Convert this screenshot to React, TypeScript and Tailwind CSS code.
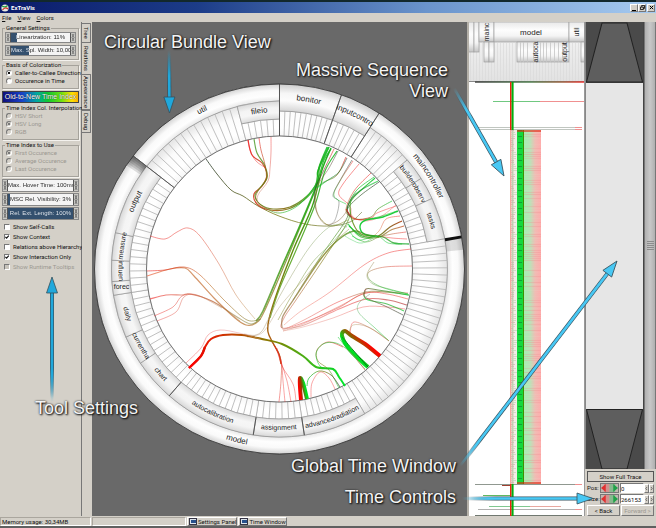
import { useState, type ReactNode } from "react";

type Pt = [number, number];

const CX = 279.5;
const CY = 269;

function polar(r: number, deg: number): Pt {
  const a = (deg * Math.PI) / 180;
  return [CX + r * Math.sin(a), CY - r * Math.cos(a)];
}

function sector(r0: number, r1: number, a0: number, a1: number) {
  const large = a1 - a0 > 180 ? 1 : 0;
  const p = [polar(r1, a0), polar(r1, a1), polar(r0, a1), polar(r0, a0)];
  return `M${p[0]} A${r1} ${r1} 0 ${large} 1 ${p[1]} L${p[2]} A${r0} ${r0} 0 ${large} 0 ${p[3]} Z`;
}

function smooth(pts: Pt[]) {
  let d = `M${pts[0]}`;
  for (let i = 0; i < pts.length - 1; i++) {
    const a = pts[i - 1] ?? pts[i];
    const b = pts[i];
    const c = pts[i + 1];
    const e = pts[i + 2] ?? c;
    d += ` C${b[0] + (c[0] - a[0]) / 6} ${b[1] + (c[1] - a[1]) / 6} ${c[0] - (e[0] - b[0]) / 6} ${c[1] - (e[1] - b[1]) / 6} ${c}`;
  }
  return d;
}

/* ---------- circular bundle view ---------- */

type Segment = { name: string; label?: string; from: number; to: number; r0: number; r1: number; at?: number; flat?: boolean };

const segments: Segment[] = [
  { name: "util", from: 307.7, to: 360, r0: 168, r1: 185, at: 334 },
  { name: "bonitor", from: 0, to: 19.6, r0: 158, r1: 185 },
  { name: "inputcontro", from: 19.6, to: 32.6, r0: 158, r1: 185 },
  { name: "maincontroller", from: 32.6, to: 80, r0: 168, r1: 185, at: 58 },
  { name: "model", from: 80, to: 307.7, r0: 168, r1: 185, at: 194 },
  { name: "fileio", from: 345.4, to: 360, r0: 150, r1: 168 },
  { name: "builder", label: "builderobserv", from: 49.5, to: 57.4, r0: 150, r1: 168, at: 57.4 },
  { name: "observ", label: "", from: 57.4, to: 65.2, r0: 150, r1: 168 },
  { name: "tasks", from: 65.2, to: 79.6, r0: 150, r1: 168 },
  { name: "advancedradiation", from: 149.5, to: 171.5, r0: 150, r1: 168 },
  { name: "assignment", from: 171.5, to: 189, r0: 150, r1: 168 },
  { name: "autocalibration", from: 189, to: 221, r0: 150, r1: 168 },
  { name: "chart", from: 221, to: 235.9, r0: 150, r1: 168 },
  { name: "currentha", from: 235.9, to: 246.1, r0: 150, r1: 168 },
  { name: "daily", from: 246.1, to: 261, r0: 150, r1: 168 },
  { name: "forec", from: 261, to: 265.7, r0: 150, r1: 168, flat: true },
  { name: "influen", from: 265.7, to: 273, r0: 150, r1: 168 },
  { name: "measure", from: 273, to: 282.5, r0: 150, r1: 168, at: 278.4 },
  { name: "output", from: 282.5, to: 307.7, r0: 150, r1: 168 },
];

const leafRuns = [
  { from: 0, to: 19.6, n: 10, r1: 158 },
  { from: 19.6, to: 32.6, n: 6, r1: 158 },
  { from: 32.6, to: 49.5, n: 7, r1: 168 },
  { from: 49.5, to: 79.6, n: 12, r1: 150 },
  { from: 79.6, to: 149.5, n: 28, r1: 168 },
  { from: 149.5, to: 171.5, n: 9, r1: 150 },
  { from: 171.5, to: 189, n: 7, r1: 150 },
  { from: 189, to: 221, n: 13, r1: 150 },
  { from: 221, to: 261, n: 15, r1: 150 },
  { from: 261, to: 307.7, n: 17, r1: 150 },
  { from: 307.7, to: 345.4, n: 14, r1: 168 },
  { from: 345.4, to: 360, n: 6, r1: 150 },
];

const RED = "#f02020";
const GREEN = "#08c828";
const OLIVE = "#7a7a10";
const DARK = "#283828";

type Edge = { p: Pt[]; a: string; m?: string; b: string; w?: number; o?: number };

const edges: Edge[] = [
  // util to main controller
  { p: [[206, 159], [217, 174], [231, 190], [243, 196], [258, 206], [279, 216], [305, 224], [330, 226], [350, 222], [362, 212]], a: DARK, m: OLIVE, b: "#889060", w: 1, o: 0.8 },
  // fileio to bonitor
  { p: [[248, 140], [252, 155], [262, 163], [267, 175], [262, 186], [254, 194], [257, 204], [270, 210], [288, 209], [304, 200], [315, 187], [319, 167], [327, 147]], a: RED, m: "#8a5a00", b: GREEN, w: 1.2, o: 0.85 },
  { p: [[254, 139], [257, 153], [265, 166], [267, 178], [259, 189], [255, 196], [261, 205], [273, 209], [290, 207], [307, 196], [317, 182], [324, 160], [331, 149]], a: "#50a030", m: "#806000", b: GREEN, w: 1.2, o: 0.85 },
  { p: [[259, 138], [261, 150], [265, 165], [266, 180], [258, 191], [256, 199], [264, 207], [280, 213], [300, 204], [318, 182]], a: RED, m: "#7a6a00", b: GREEN, w: 1, o: 0.6 },
  { p: [[271, 137], [271, 152], [270, 168], [268, 181], [258, 195], [259, 204], [270, 210]], a: RED, b: "#c09070", w: 1, o: 0.45 },
  { p: [[248, 140], [250, 150], [256, 161], [266, 168]], a: RED, b: RED, w: 1, o: 0.45 },
  // fan below bonitor
  { p: [[328, 147], [320, 165], [317, 185], [301, 225], [284, 266], [264, 312], [256, 323], [246, 325], [235, 318], [214, 298], [194, 276], [185, 268], [170, 269], [147, 276]], a: "#18b020", m: OLIVE, b: "#f07050", w: 1.2, o: 0.75 },
  { p: [[331, 148], [322, 170], [312, 207], [294, 248], [278, 290], [269, 319], [268, 332], [273, 343], [279, 354], [281, 364]], a: "#18b020", m: "#609010", b: "#c05010", w: 1.4 },
  { p: [[329, 147], [318, 171], [317, 184], [298, 230], [280, 271], [263, 311], [256, 321]], a: "#10b820", m: "#30a010", b: "#70a040", w: 1.7, o: 0.9 },
  { p: [[337, 151], [325, 171], [315, 205], [297, 248], [279, 290], [270, 318]], a: "#10b820", m: "#40a010", b: "#70a020", w: 1.2, o: 0.85 },
  { p: [[334, 149], [323, 172], [315, 190], [316, 210], [325, 224], [338, 221], [347, 211]], a: RED, m: DARK, b: "#988060", w: 1, o: 0.6 },
  { p: [[338, 151], [329, 168], [317, 188], [317, 212], [330, 226], [348, 220]], a: DARK, m: "#c06040", b: OLIVE, w: 1, o: 0.5 },
  { p: [[346, 157], [337, 175], [324, 182], [316, 188]], a: RED, b: GREEN, w: 1, o: 0.7 },
  { p: [[347, 158], [339, 172], [328, 180], [317, 188]], a: DARK, b: GREEN, w: 1, o: 0.6 },
  { p: [[352, 160], [342, 177], [333, 195], [339, 202], [335, 220], [328, 226]], a: DARK, b: "#808080", w: 1, o: 0.5 },
  { p: [[353, 161], [340, 181], [334, 196], [346, 204]], a: RED, b: GREEN, w: 1, o: 0.5 },
  { p: [[359, 164], [343, 184], [339, 195], [350, 206], [352, 216], [364, 221], [380, 217], [396, 205]], a: RED, b: "#f07070", w: 1, o: 0.5 },
  { p: [[371, 173], [354, 191], [346, 211], [356, 219], [374, 218], [397, 211]], a: RED, m: OLIVE, b: GREEN, w: 1, o: 0.55 },
  { p: [[374, 177], [356, 191], [347, 209], [348, 221], [323, 260], [296, 300], [284, 318], [282, 328], [300, 324], [338, 308], [366, 293], [408, 293]], a: GREEN, m: OLIVE, b: "#f07070", w: 1, o: 0.65 },
  { p: [[379, 182], [361, 195], [348, 208], [346, 220], [319, 259], [293, 300]], a: DARK, m: "#58a030", b: "#909050", w: 1, o: 0.65 },
  { p: [[375, 178], [354, 197], [350, 207], [353, 223], [361, 234], [377, 236]], a: GREEN, b: OLIVE, w: 1.1, o: 0.85 },
  { p: [[378, 181], [361, 190], [352, 198], [347, 210], [351, 217]], a: GREEN, b: DARK, w: 1.3, o: 0.65 },
  { p: [[392, 201], [378, 209], [371, 217], [354, 219], [346, 209]], a: GREEN, b: RED, w: 1, o: 0.65 },
  { p: [[396, 206], [377, 213], [371, 218], [355, 219], [346, 209]], a: RED, b: RED, w: 1, o: 0.45 },
  { p: [[398, 211], [383, 217], [366, 220], [360, 226], [364, 234], [379, 237]], a: GREEN, b: GREEN, w: 1.4, o: 0.9 },
  { p: [[400, 216], [386, 219], [379, 231], [369, 237], [352, 230]], a: RED, m: "#e08050", b: GREEN, w: 1, o: 0.5 },
  { p: [[402, 221], [390, 227], [378, 236], [362, 236], [349, 226]], a: "#a83000", b: GREEN, w: 1.2, o: 0.85 },
  { p: [[404, 226], [391, 230], [379, 237], [361, 237], [348, 224]], a: "#c04010", b: GREEN, w: 1.1, o: 0.7 },
  { p: [[406, 232], [392, 234], [379, 237], [366, 242], [352, 236]], a: RED, b: GREEN, w: 1, o: 0.5 },
  { p: [[407, 239], [392, 238], [378, 236]], a: RED, b: RED, w: 1, o: 0.45 },
  { p: [[409, 244], [394, 243], [383, 237], [368, 235], [354, 231], [338, 240], [320, 260], [298, 293], [283, 316], [282, 328]], a: "#10a828", m: OLIVE, b: "#a07850", w: 1.3, o: 0.75 },
  { p: [[402, 244], [388, 243], [377, 236], [359, 240], [349, 231]], a: GREEN, b: GREEN, w: 1, o: 0.5 },
  { p: [[377, 236], [362, 243], [352, 240], [345, 236]], a: "#60d070", b: "#80e090", w: 1, o: 0.6 },
  { p: [[347, 227], [331, 226], [309, 248], [282, 292], [268, 320], [260, 333], [247, 337]], a: "#88b070", b: "#b09878", w: 1, o: 0.5 },
  { p: [[349, 229], [330, 247], [303, 280], [281, 305], [262, 333], [244, 334]], a: OLIVE, b: "#c0a090", w: 1, o: 0.4 },
  { p: [[348, 224], [332, 243], [312, 263], [292, 295], [278, 320]], a: "#60a850", b: OLIVE, w: 1, o: 0.45 },
  // model bundle on the right
  { p: [[411, 249], [388, 253], [364, 265], [330, 292], [301, 311], [284, 325]], a: RED, b: "#f09080", w: 1, o: 0.5 },
  { p: [[412, 266], [385, 267], [369, 272], [370, 280], [384, 288], [408, 294]], a: RED, b: GREEN, w: 1, o: 0.45 },
  { p: [[374, 262], [367, 275], [373, 284], [389, 289], [408, 294]], a: "#a09060", b: GREEN, w: 1, o: 0.5 },
  { p: [[409, 295], [385, 292], [366, 292], [338, 302], [304, 320], [283, 330]], a: GREEN, m: "#f04040", b: "#e09080", w: 1, o: 0.55 },
  { p: [[408, 299], [387, 294], [366, 293], [340, 306], [303, 324], [283, 331]], a: RED, b: "#e09080", w: 1, o: 0.5 },
  { p: [[407, 305], [388, 300], [366, 299], [339, 309], [304, 325], [282, 329]], a: "#a81818", m: "#f05050", b: "#d0a090", w: 1.1, o: 0.6 },
  { p: [[405, 309], [387, 307], [363, 307], [333, 318], [303, 327], [283, 331]], a: RED, b: "#e0a090", w: 1, o: 0.4 },
  { p: [[404, 311], [387, 304], [366, 299], [366, 289], [378, 290], [409, 295]], a: GREEN, m: "#803020", b: GREEN, w: 1.1, o: 0.7 },
  { p: [[403, 315], [385, 306], [365, 297], [366, 291]], a: DARK, b: "#905030", w: 1, o: 0.6 },
  { p: [[389, 341], [375, 328], [359, 313], [359, 303], [370, 294]], a: GREEN, b: "#80b080", w: 1, o: 0.5 },
  { p: [[388, 340], [372, 329], [354, 322], [350, 333]], a: GREEN, b: RED, w: 1, o: 0.4 },
  { p: [[389, 341], [368, 327], [353, 325], [349, 333]], a: RED, b: "#a0a060", w: 1, o: 0.4 },
  // heavy bundles at the bottom
  { p: [[380, 356], [365, 344], [352, 336], [345, 331], [342, 336], [350, 350], [368, 367]], a: "#ff0000", m: "#8a6200", b: "#00e020", w: 4 },
  { p: [[368, 367], [353, 350], [342, 337]], a: "#046010", b: "#04a020", w: 1 },
  { p: [[365, 369], [349, 351], [338, 337]], a: GREEN, b: GREEN, w: 1, o: 0.5 },
  { p: [[301, 400], [300, 387], [300, 378], [303, 383], [307, 399]], a: "#ff0000", m: "#8a4200", b: "#00e020", w: 4 },
  { p: [[189, 368], [201, 356], [205, 347], [211, 339], [223, 335], [242, 335], [262, 339], [282, 344], [303, 356], [316, 367], [333, 369], [339, 377], [345, 386]], a: "#ff0000", m: "#848000", b: "#00e82c", w: 2 },
  { p: [[189, 368], [201, 356], [205, 347]], a: "#ff0000", b: "#e01000", w: 2.4 },
  { p: [[186, 363], [201, 348], [208, 335], [220, 330], [239, 333], [260, 339]], a: RED, b: "#e0a0a0", w: 1, o: 0.4 },
  { p: [[339, 388], [329, 370], [318, 361], [317, 350], [328, 342], [343, 347]], a: GREEN, m: OLIVE, b: RED, w: 1, o: 0.55 },
  { p: [[340, 387], [331, 375], [319, 371], [309, 378], [307, 386]], a: DARK, m: OLIVE, b: GREEN, w: 1, o: 0.7 },
  { p: [[335, 389], [329, 378], [320, 372], [312, 383], [311, 397]], a: RED, b: RED, w: 1, o: 0.4 },
  { p: [[365, 370], [350, 352], [336, 343], [323, 344], [316, 354], [321, 367], [334, 369]], a: RED, m: "#b08060", b: GREEN, w: 1, o: 0.55 },
  { p: [[279, 402], [281, 381], [281, 360], [274, 345], [269, 340]], a: RED, b: "#a05010", w: 1, o: 0.45 },
  { p: [[285, 402], [283, 381], [281, 360], [274, 345]], a: RED, b: RED, w: 1, o: 0.4 },
  { p: [[291, 402], [287, 381], [281, 362], [275, 346]], a: RED, b: RED, w: 1, o: 0.4 },
  { p: [[296, 401], [293, 384], [282, 366], [277, 348]], a: RED, b: RED, w: 1, o: 0.4 },
  // left side bundles
  { p: [[150, 236], [165, 239], [177, 232], [188, 228], [200, 236], [219, 264], [236, 295], [255, 319]], a: RED, b: "#c0a060", w: 1, o: 0.5 },
  { p: [[147, 271], [165, 270], [184, 267], [200, 275], [226, 302], [247, 320], [261, 319]], a: RED, m: "#c06a20", b: "#808030", w: 1, o: 0.6 },
  { p: [[150, 299], [166, 295], [182, 295], [190, 294], [212, 301], [237, 317], [251, 324], [260, 319]], a: RED, m: "#c07040", b: "#788838", w: 1.1, o: 0.6 },
  { p: [[154, 316], [173, 307], [182, 296], [196, 295], [219, 305], [240, 321]], a: RED, b: "#b08050", w: 1, o: 0.45 },
  { p: [[157, 321], [176, 312], [184, 297], [197, 295], [222, 308]], a: RED, b: "#b08050", w: 1, o: 0.4 },
];

function ArcLabel({ seg, index }: { seg: Segment; index: number }) {
  const mid = seg.at ?? (seg.from + seg.to) / 2;
  const rc = (seg.r0 + seg.r1) / 2;
  const size = seg.r1 > 170 || seg.name === "fileio" || seg.name === "output" ? 8 : 7;
  const text = seg.label ?? seg.name;
  if (!text) return null;
  if (seg.flat) {
    const [x, y] = polar(rc, mid);
    return <text x={x} y={y + 2} fontSize={size} textAnchor="middle">{text}</text>;
  }
  const inward = mid > 90 && mid < 270;
  const r = inward ? rc + 2 : rc - 2;
  const start = polar(r, inward ? mid + 30 : mid - 30);
  const end = polar(r, inward ? mid - 30 : mid + 30);
  return (
    <>
      <path id={`arc-${index}`} d={`M${start} A${r} ${r} 0 0 ${inward ? 0 : 1} ${end}`} fill="none" />
      <text fontSize={size} textAnchor="middle">
        <textPath href={`#arc-${index}`} startOffset="50%">{text}</textPath>
      </text>
    </>
  );
}

function BundleView() {
  return (
    <svg viewBox="92 22 375 494" className="block h-full w-full" role="img" aria-label="Circular bundle view">
      <defs>
        <radialGradient id="ring" gradientUnits="userSpaceOnUse" cx={CX} cy={CY} r="185">
          <stop offset="0.905" stopColor="#e6e6e6" />
          <stop offset="0.935" stopColor="#fefefe" />
          <stop offset="0.965" stopColor="#fafafa" />
          <stop offset="1" stopColor="#d2d2d2" />
        </radialGradient>
        <radialGradient id="tall" gradientUnits="userSpaceOnUse" cx={CX} cy={CY} r="185">
          <stop offset="0.855" stopColor="#d6d6d6" />
          <stop offset="0.91" stopColor="#fcfcfc" />
          <stop offset="0.95" stopColor="#f6f6f6" />
          <stop offset="1" stopColor="#cccccc" />
        </radialGradient>
        <radialGradient id="inner" gradientUnits="userSpaceOnUse" cx={CX} cy={CY} r="168">
          <stop offset="0.89" stopColor="#dadada" />
          <stop offset="0.93" stopColor="#f6f6f6" />
          <stop offset="0.96" stopColor="#f4f4f4" />
          <stop offset="1" stopColor="#d8d8d8" />
        </radialGradient>
        <radialGradient id="leaf" gradientUnits="userSpaceOnUse" cx={CX} cy={CY} r="168">
          <stop offset="0.79" stopColor="#f6f6f6" />
          <stop offset="0.84" stopColor="#ffffff" />
          <stop offset="0.93" stopColor="#fcfcfc" />
          <stop offset="1" stopColor="#e4e4e4" />
        </radialGradient>
        {edges.map((e, i) => {
          const s = e.p[0];
          const t = e.p[e.p.length - 1];
          return (
            <linearGradient key={i} id={`edge-${i}`} gradientUnits="userSpaceOnUse" x1={s[0]} y1={s[1]} x2={t[0]} y2={t[1]}>
              <stop offset="0" stopColor={e.a} />
              {e.m && <stop offset="0.5" stopColor={e.m} />}
              <stop offset="1" stopColor={e.b} />
            </linearGradient>
          );
        })}
      </defs>
      <circle cx={CX} cy={CY} r="185" fill="#f4f4f4" stroke="#333" strokeWidth="1" />
      {leafRuns.map((run) => (
        <g key={run.from}>
          <path d={sector(133, run.r1, run.from, run.to)} fill="url(#leaf)" stroke="#999" strokeWidth="0.6" />
          {Array.from({ length: run.n - 1 }, (_, k) => {
            const a = run.from + ((run.to - run.from) * (k + 1)) / run.n;
            return <path key={k} d={`M${polar(133, a)} L${polar(run.r1, a)}`} stroke="#c0c0c0" strokeWidth="1" />;
          })}
        </g>
      ))}
      {segments.map((s) => (
        <path
          key={s.name}
          d={sector(s.r0, s.r1, s.from, s.to === 360 ? 359.99 : s.to)}
          fill={s.r1 < 180 ? "url(#inner)" : s.r0 < 160 ? "url(#tall)" : "url(#ring)"}
          stroke="#888"
          strokeWidth="0.6"
        />
      ))}
      {[0, 1, 2, 3, 4].map((k) => (
        <g key={k} fill="#000" opacity="0.13">
          <path d={sector(168, 185, 307.7 - 3.6 + k * 0.7, 307.7)} />
        </g>
      ))}
      <path d={sector(168, 185, 80, 84)} fill="#000" opacity="0.12" />
      <path d={`M${polar(168, 80)} L${polar(185, 80)}`} stroke="#111" strokeWidth="3" />
      {[0, 19.6, 32.6, 307.7].map((a) => (
        <path key={a} d={`M${polar(133, a)} L${polar(185, a)}`} stroke="#555" strokeWidth="1" />
      ))}
      {[221, 189, 171.5].map((a) => (
        <path key={a} d={`M${polar(150, a)} L${polar(168, a)}`} stroke="#555" strokeWidth="1" />
      ))}
      <circle cx={CX} cy={CY} r="185" fill="none" stroke="#333" strokeWidth="0.8" />
      <circle cx={CX} cy={CY} r="133" fill="#fff" stroke="#555" strokeWidth="0.8" />
      <g fill="none">
        {edges.map((e, i) => (
          <path key={i} d={smooth(e.p)} stroke={`url(#edge-${i})`} strokeWidth={e.w ?? 1} opacity={e.o ?? 1} />
        ))}
      </g>
      <g className="font-['Liberation_Sans',sans-serif]" fill="#222">
        {segments.map((s, i) => (
          <ArcLabel key={s.name} seg={s} index={i} />
        ))}
      </g>
    </svg>
  );
}

/* ---------- massive sequence view ---------- */

function rand(i: number) {
  const v = Math.sin(i * 127.1 + 3.7) * 43758.5453;
  return v - Math.floor(v);
}

function Block({ x, y, w, h }: { x: number; y: number; w: number; h: number }) {
  return <rect x={x} y={y} width={w} height={h} fill="url(#block)" stroke="#a0a0a0" strokeWidth="0.7" />;
}

function Turned({ x, y, children }: { x: number; y: number; children: string }) {
  return (
    <text x={x} y={y} fontSize="7" textAnchor="middle" transform={`rotate(-90 ${x} ${y})`}>
      {children}
    </text>
  );
}

function SequenceView() {
  const rows = Array.from({ length: 177 }, (_, i) => i);
  return (
    <svg viewBox="469 22 116 494" preserveAspectRatio="none" className="block h-full w-full" role="img" aria-label="Massive sequence view">
      <defs>
        <linearGradient id="block" x1="0" y1="0" x2="0" y2="1">
          <stop offset="0" stopColor="#e8e8e8" />
          <stop offset="0.4" stopColor="#fdfdfd" />
          <stop offset="0.7" stopColor="#f4f4f4" />
          <stop offset="1" stopColor="#c4c4c4" />
        </linearGradient>
        <linearGradient id="fall" x1="0" y1="0" x2="0" y2="1">
          <stop offset="0" stopColor="#f6f6f6" />
          <stop offset="1" stopColor="#e2e2e2" />
        </linearGradient>
        <linearGradient id="fade" x1="524" x2="541" y1="0" y2="0" gradientUnits="userSpaceOnUse">
          <stop offset="0" stopColor="#a4f0b0" />
          <stop offset="0.35" stopColor="#b8e4b8" />
          <stop offset="0.65" stopColor="#f0bcb4" />
          <stop offset="1" stopColor="#ffacac" />
        </linearGradient>
        <linearGradient id="call" x1="475" x2="585" y1="0" y2="0" gradientUnits="userSpaceOnUse">
          <stop offset="0" stopColor="#444" />
          <stop offset="0.5" stopColor="#508050" />
          <stop offset="0.8" stopColor="#a06040" />
          <stop offset="1" stopColor="#f03030" />
        </linearGradient>
      </defs>
      <rect x="468" y="22" width="117" height="494" fill="#fff" />
      <rect x="468" y="22" width="117" height="59" fill="url(#fall)" />
      {rows.slice(0, 38).map((i) => (
        <path key={i} d={`M${470.5 + i * 3} ${i > 15 && i < 34 ? 62 : 43} V81`} stroke="#dadada" strokeWidth="0.7" />
      ))}
      <Block x={468} y={22} w={6} h={30} />
      <Block x={474} y={22} w={5} h={30} />
      <Block x={479} y={22} w={15} h={20} />
      <Block x={494} y={22} w={75} h={20} />
      <Block x={569} y={22} w={16} h={20} />
      <Block x={484} y={42} w={5} h={20} />
      <Block x={489} y={42} w={5} h={20} />
      <Block x={517} y={42} w={52} h={20} />
      {[520, 523, 527, 533, 540, 543, 546, 550, 554, 558, 562].map((x) => (
        <path key={x} d={`M${x}.5 42 V62`} stroke="#c4c4c4" strokeWidth="0.8" />
      ))}
      <Block x={581} y={42} w={4} h={20} />
      <g className="font-['Liberation_Sans',sans-serif]" fill="#222">
        <text x="531" y="35" fontSize="8" textAnchor="middle">model</text>
        <Turned x={489} y={32}>mainc</Turned>
        <Turned x={579} y={32}>util</Turned>
        <Turned x={538} y={52}>autoca</Turned>
        <Turned x={567} y={52}>output</Turned>
      </g>
      <path d="M468 81.5 H585" stroke="#888" />
      <path d="M475 82 H585" stroke="url(#call)" strokeWidth="1.4" />
      <path d="M493 101.5 H585" stroke="#f09090" />
      <path d="M493 101.5 H540" stroke="#70c880" />
      <path d="M478 127.5 H575 M479 129.5 H575" stroke="#b0b8b0" strokeWidth="0.8" />
      <path d="M575 127.5 H582 M575 129.5 H582" stroke="#f09090" />
      <rect x="510" y="82" width="1.6" height="48" fill="#f02010" />
      <rect x="511.6" y="82" width="2" height="48" fill="#00b010" />

      <rect x="510" y="130" width="7" height="354" fill="#f2ece6" />
      <rect x="510" y="130" width="1.5" height="354" fill="#f4a8a0" />
      <rect x="512" y="130" width="1.5" height="354" fill="#c4d0b4" />
      <rect x="517" y="130" width="7" height="354" fill="#14d83c" />
      <rect x="524" y="130" width="17" height="354" fill="url(#fade)" />
      {rows.map((i) => {
        const y = 130 + i * 2;
        const v = rand(i);
        return (
          <g key={i}>
            <path d={`M511 ${y + 0.5} H${513 + Math.round(v * 4)}`} stroke={v > 0.5 ? "#c8d0b8" : "#d0b4ac"} strokeWidth="1" opacity="0.7" />
            <path d={`M524 ${y + 0.5} H541`} stroke={v > 0.6 ? "#f09090" : "#e8d8c8"} strokeWidth="1" opacity={v * 0.35} />
            {i % 3 === 0 && <path d={`M518 ${y + 0.5} H522`} stroke="#108830" strokeWidth="1" opacity="0.7" />}
          </g>
        );
      })}
      <path d="M523.5 130 V484" stroke="#409000" strokeWidth="1" />
      <path d="M517 131 H541 M517 483 H541" stroke="#e02810" strokeWidth="1.6" opacity="0.8" />

      <path d="M475 484.5 H575" stroke="#909890" />
      <path d="M575 484.5 H582 M575 509.5 H582" stroke="#f09090" />
      <path d="M502 485.5 H510 M502 506.5 H505" stroke="#a04030" />
      <path d="M483 495.5 H510" stroke="#60b860" />
      <path d="M489 506.5 H530" stroke="#80c890" />
      <path d="M530 506.5 H561" stroke="#e8a8a0" />
      <path d="M478 509.5 H575" stroke="#b0b0b0" />
      <path d="M475 515.5 H582" stroke="#707870" />
      <rect x="510" y="484" width="1.6" height="32" fill="#f02010" />
      <rect x="511.6" y="484" width="2" height="32" fill="#00b010" />
      <path d="M584.5 22 V516" stroke="#999" />
    </svg>
  );
}

/* ---------- controls ---------- */

function SliderEnd() {
  return (
    <svg viewBox="0 0 4 10" preserveAspectRatio="none" className="h-full w-1 shrink-0">
      <path d="M3 1 L1 5 L3 9 M1 1 L3 5 L1 9" fill="none" stroke="#666" strokeWidth="0.8" />
    </svg>
  );
}

function TextSlider({ label, unit, value, fill, tall }: { label: string; unit: string; value: string; fill: number; tall?: boolean }) {
  const [v, setV] = useState(fill);
  return (
    <label className={`relative flex items-stretch border border-[#888] bg-[#c8c8c4] ${tall ? "h-[13px]" : "h-[11px]"}`}>
      <SliderEnd />
      <span
        className="flex min-w-0 flex-1 items-center justify-center overflow-hidden border-x border-[#555]"
        style={{ background: `linear-gradient(to right, #34506e ${v}%, #f4f4f4 ${v}%)` }}
      >
        <span
          className="w-full bg-clip-text text-center font-['Liberation_Sans',sans-serif] text-[6px] leading-[9px] whitespace-nowrap text-transparent"
          style={{ backgroundImage: `linear-gradient(to right, #f2f4f8 ${v}%, #222 ${v}%)` }}
        >
          {label}: {value}{unit}
        </span>
      </span>
      <SliderEnd />
      <input
        type="range"
        min={0}
        max={100}
        value={v}
        onChange={(e) => setV(Number(e.target.value))}
        className="absolute inset-0 h-full w-full opacity-0"
      />
    </label>
  );
}

const inputBase = "m-0 size-[6px] shrink-0 appearance-none border border-[#777] border-r-white border-b-white bg-white";

function Radio({ name, children, checked, disabled }: { name: string; children: ReactNode; checked?: boolean; disabled?: boolean }) {
  return (
    <label className={`flex h-2 items-center gap-[3px] pl-[1px] whitespace-nowrap ${disabled ? "text-[#9b9891]" : ""}`}>
      <input
        type="radio"
        name={name}
        defaultChecked={checked}
        disabled={disabled}
        className={`${inputBase} rounded-full checked:bg-[radial-gradient(circle,#111_35%,#fff_45%)] disabled:bg-[#d4d0c8] disabled:checked:bg-[radial-gradient(circle,#777_35%,#d4d0c8_45%)]`}
      />
      {children}
    </label>
  );
}

function Check({ children, checked, disabled }: { children: ReactNode; checked?: boolean; disabled?: boolean }) {
  return (
    <label className={`flex h-[10px] items-center gap-[3px] whitespace-nowrap ${disabled ? "text-[#9b9891]" : ""}`}>
      <span className="relative flex size-[6px] shrink-0">
        <input type="checkbox" defaultChecked={checked} disabled={disabled} className={`peer ${inputBase} disabled:bg-[#c8c4bc]`} />
        <svg viewBox="0 0 6 6" className="pointer-events-none absolute inset-0 hidden peer-checked:block">
          <path d="M1.4 2.8 L2.6 4.2 L4.8 1.6" fill="none" stroke="#111" strokeWidth="1.1" />
        </svg>
      </span>
      {children}
    </label>
  );
}

function Group({ title, children }: { title: string; children: ReactNode }) {
  return (
    <fieldset className="min-w-0 border border-[#a5a29b] px-[2px] pt-[1px] pb-[3px] shadow-[1px_1px_0_#f4f2ee]">
      <legend className="h-[6px] px-[1px] leading-[6px] whitespace-nowrap">{title}</legend>
      {children}
    </fieldset>
  );
}

function SettingsPanel() {
  return (
    <aside className="flex w-[82px] shrink-0 flex-col gap-[2px] border-r border-[#777] bg-[#d4d0c8] px-[2px] pt-[3px]">
      <Group title="General Settings">
        <div className="flex flex-col gap-[2px]">
          <TextSlider label="Linearization" value="11" unit="%" fill={11} />
          <TextSlider label="Max. Spl. Width" value="10,00" unit="" fill={30} />
        </div>
      </Group>
      <Group title="Basis of Colorization">
        <Radio name="basis" checked>Caller-to-Callee Direction</Radio>
        <Radio name="basis">Occurence in Time</Radio>
      </Group>
      <button className="h-3 border border-[#444] bg-[linear-gradient(to_right,#10107a,#1840c8_25%,#00a8a0_45%,#10c830_60%,#70e010_78%,#ffe000_92%,#ffb000)] font-['Liberation_Sans',sans-serif] text-[7px] leading-[10px] whitespace-nowrap text-white [text-shadow:0_0_1px_#000]">
        Old-to-New Time Index
      </button>
      <Group title="Time Index Col. Interpolation">
        <Radio name="interp" disabled>HSV Short</Radio>
        <Radio name="interp" checked disabled>HSV Long</Radio>
        <Radio name="interp" disabled>RGB</Radio>
      </Group>
      <Group title="Time Index to Use">
        <Radio name="index" checked disabled>First Occurence</Radio>
        <Radio name="index" disabled>Average Occurence</Radio>
        <Radio name="index" disabled>Last Occurence</Radio>
      </Group>
      <div className="flex flex-col gap-[1px]">
        <TextSlider tall label="Max. Hover Time" value="100" unit="ms" fill={0} />
        <TextSlider tall label="MSC Rel. Visibility" value="3" unit="%" fill={3} />
        <TextSlider tall label="Rel. Ext. Length" value="100" unit="%" fill={100} />
      </div>
      <div className="flex flex-col pl-[2px]">
        <Check>Show Self-Calls</Check>
        <Check checked>Show Context</Check>
        <Check>Relations above Hierarchy</Check>
        <Check checked>Show Interaction Only</Check>
        <Check disabled>Show Runtime Tooltips</Check>
      </div>
    </aside>
  );
}

const tabBase = "flex w-[9px] shrink-0 items-center justify-center rounded-r-[1px] border border-l-0 bg-[#d4d0c8] leading-[7px] [writing-mode:vertical-rl]";

function SideTabs() {
  return (
    <div role="tablist" className="flex w-[10px] shrink-0 flex-col bg-[#d4d0c8] pt-[1px]">
      <button role="tab" className={`${tabBase} h-[20px] border-[#777]`}>Tree</button>
      <button role="tab" aria-selected="true" className={`${tabBase} h-[31px] border-transparent`}>Relations</button>
      <button role="tab" className={`${tabBase} h-[36px] border-[#777]`}>Appearance</button>
      <button role="tab" className={`${tabBase} h-[23px] border-[#777]`}>Debug</button>
    </div>
  );
}

const raised = "border border-white border-r-[#777] border-b-[#777] bg-[#d4d0c8]";

function Jog({ label }: { label: string }) {
  return (
    <button aria-label={`Shift ${label}`} className="h-[10px] w-[19px] shrink-0 border border-[#777]">
      <svg viewBox="0 0 18 8" className="block h-full w-full" preserveAspectRatio="none">
        <rect width="18" height="8" fill="#c0b8b0" />
        <rect x="3" width="6" height="8" fill="#d88080" opacity="0.7" />
        <rect x="9" width="6" height="8" fill="#70b880" opacity="0.7" />
        <path d="M0 4 L5 0 V8 Z" fill="#e03030" />
        <path d="M18 4 L13 0 V8 Z" fill="#20a048" />
      </svg>
    </button>
  );
}

function Nudge({ label, flip }: { label: string; flip?: boolean }) {
  return (
    <button aria-label={label} className={`flex h-[9px] w-[5px] shrink-0 items-center justify-center ${raised}`}>
      <svg viewBox="0 0 3 5" className="h-[5px] w-[3px]">
        <path d={flip ? "M1 1 L2.2 2.5 L1 4" : "M2 1 L0.8 2.5 L2 4"} fill="none" stroke="#555" strokeWidth="0.8" />
      </svg>
    </button>
  );
}

function TimeRow({ label, value }: { label: string; value: string }) {
  const id = `time-${label}`;
  return (
    <div className="flex h-[10px] items-center">
      <label htmlFor={id} className="w-[13px] shrink-0">{label}:</label>
      <Jog label={label} />
      <input id={id} defaultValue={value} className="ml-[1px] h-[10px] w-0 min-w-0 flex-1 border border-[#777] border-r-white border-b-white bg-white leading-[8px]" />
      <Nudge label={`${label} down`} />
      <Nudge label={`${label} up`} flip />
    </div>
  );
}

function TimeColumn() {
  return (
    <aside className="flex w-[71px] shrink-0 flex-col bg-[#d4d0c8]">
      <div className="flex min-h-0 flex-1">
        <div className="flex w-[59px] flex-col border-x border-[#888] border-r-[#444] bg-[#e6e6e6]">
          <svg viewBox="0 0 57 60" preserveAspectRatio="none" className="block h-[61px] w-full">
            <rect width="57" height="60" fill="#4a4a4a" />
            <path d="M0.5 59 L16 1 H41 L56.5 59 Z" fill="#5e5e5e" stroke="#222" />
          </svg>
          <div className="flex-1" />
          <svg viewBox="0 0 57 60" preserveAspectRatio="none" className="block h-[60px] w-full">
            <rect width="57" height="60" fill="#4a4a4a" />
            <path d="M0.5 0.5 H56.5 L41 60 H16 Z" fill="#5e5e5e" stroke="#222" />
          </svg>
        </div>
        <div className="flex flex-1 flex-col items-center justify-center gap-[1px] border-x border-[#777] bg-[linear-gradient(to_right,#b0b0b0,#c8c8c8,#b0b0b0)]">
          {[0, 1, 2, 3, 4].map((k) => (
            <span key={k} className="h-px w-[7px] bg-[#8c8c8c]" />
          ))}
        </div>
      </div>
      <div className="flex flex-col gap-[1px] px-[2px] pt-[2px]">
        <button className="h-[11px] border border-[#555] bg-[#d4d0c8] leading-[8px]">Show Full Trace</button>
        <TimeRow label="Pos" value="0" />
        <TimeRow label="Size" value="266153" />
        <div className="flex gap-[1px]">
          <button className={`h-[11px] flex-1 leading-[8px] whitespace-nowrap ${raised}`}>&lt; Back</button>
          <button disabled className={`h-[11px] flex-1 leading-[8px] whitespace-nowrap text-[#9b9891] ${raised}`}>Forward &gt;</button>
        </div>
      </div>
    </aside>
  );
}

/* ---------- annotations ---------- */

function Arrow({ id, from, to, color }: { id: string; from: Pt; to: Pt; color: string }) {
  const dx = to[0] - from[0];
  const dy = to[1] - from[1];
  const len = Math.hypot(dx, dy);
  const deg = (Math.atan2(dy, dx) * 180) / Math.PI;
  return (
    <g transform={`translate(${from[0]} ${from[1]}) rotate(${deg})`}>
      <defs>
        <linearGradient id={`${id}-l`} x1="0" x2="26" y1="0" y2="0" gradientUnits="userSpaceOnUse">
          <stop offset="0" stopColor={color} stopOpacity="0" />
          <stop offset="1" stopColor={color} />
        </linearGradient>
        <linearGradient id={`${id}-d`} x1="4" x2="34" y1="0" y2="0" gradientUnits="userSpaceOnUse">
          <stop offset="0" stopColor="#36505c" stopOpacity="0" />
          <stop offset="1" stopColor="#36505c" />
        </linearGradient>
      </defs>
      <rect x="0" y="-2" width={len - 14} height="4" fill={`url(#${id}-d)`} />
      <rect x="0" y="-1.3" width={len - 14} height="2.6" fill={`url(#${id}-l)`} />
      <path d={`M${len} 0 L${len - 16} -5.5 V5.5 Z`} fill={color} stroke="#36505c" strokeWidth="0.8" />
    </g>
  );
}

function Annotations() {
  return (
    <svg viewBox="0 0 656 528" className="pointer-events-none absolute inset-0 h-full w-full">
      <Arrow id="a1" from={[169, 50]} to={[169.5, 113]} color="#20a8dc" />
      <Arrow id="a2" from={[454, 88]} to={[504, 176]} color="#48c8f4" />
      <Arrow id="a3" from={[460, 466]} to={[617, 261]} color="#48c8f4" />
      <Arrow id="a4" from={[462, 498.5]} to={[593, 498.5]} color="#48c8f4" />
      <Arrow id="a5" from={[52, 402]} to={[52, 277]} color="#20a8dc" />
      <g className="font-['Liberation_Sans',sans-serif] text-[18px] [text-shadow:1px_1px_2px_#000,0_0_2px_#222]" fill="#f4f4f4">
        <text x="104" y="48">Circular Bundle View</text>
        <text x="448" y="76" textAnchor="end">Massive Sequence</text>
        <text x="448" y="97" textAnchor="end">View</text>
        <text x="35" y="414">Tool Settings</text>
        <text x="456" y="472" textAnchor="end">Global Time Window</text>
        <text x="456" y="503" textAnchor="end">Time Controls</text>
      </g>
    </svg>
  );
}

function StatusButton({ children }: { children: ReactNode }) {
  return (
    <button className={`flex items-center gap-[1px] pl-[1px] ${raised}`}>
      <svg viewBox="0 0 8 7" className="h-[7px] w-2">
        <rect x="0.5" y="0.5" width="7" height="6" fill="#dce4ec" stroke="#334" />
        <rect x="2" y="2" width="5" height="3" fill="#28508c" />
      </svg>
      {children}
    </button>
  );
}

export default function App() {
  return (
    <div className="relative flex h-screen w-full flex-col overflow-hidden bg-[#d4d0c8] font-[Roboto,'Liberation_Sans',sans-serif] text-[6px] leading-[8px] text-[#111]">
      <header className="flex h-[13px] shrink-0 items-center gap-[2px] border-t-2 border-[#12282c] bg-[linear-gradient(to_right,#0a1a6a,#1c3c88_30%,#6a94cc_65%,#a6caf0)] pr-[1px] pl-[1px] text-white">
        <svg viewBox="0 0 8 8" className="size-2">
          <circle cx="4" cy="4" r="3.6" fill="#e8e8e0" />
          <path d="M1 2 Q4 4 6.5 1.5" stroke="#20a040" fill="none" strokeWidth="1.2" />
          <path d="M1.5 6 Q4 2.5 7 5" stroke="#d03020" fill="none" strokeWidth="1.2" />
        </svg>
        <h1 className="flex-1 text-[6px] font-bold">ExTraVis</h1>
        <div className="flex text-black">
          <button aria-label="Minimize" className={`flex h-2 w-2 items-end justify-center ${raised}`}><span className="h-px w-1 bg-black" /></button>
          <button aria-label="Restore" className={`flex h-2 w-2 items-center justify-center ${raised}`}><svg viewBox="0 0 6 6" className="size-[5px]"><path d="M2 2V0.5H5.5V4H4M0.5 2.5H4V5.5H0.5Z" fill="none" stroke="#000" /></svg></button>
          <button aria-label="Close" className={`ml-[1px] flex h-2 w-2 items-center justify-center ${raised}`}><svg viewBox="0 0 6 6" className="size-[5px]"><path d="M1 1L5 5M5 1L1 5" stroke="#000" strokeWidth="1.2" /></svg></button>
        </div>
      </header>
      <nav className="flex h-[9px] shrink-0 items-center gap-[6px] px-[2px]">
        <button><u>F</u>ile</button>
        <button><u>V</u>iew</button>
        <button><u>C</u>olors</button>
      </nav>
      <main className="flex min-h-0 flex-1">
        <SettingsPanel />
        <SideTabs />
        <section className="min-w-0 flex-1 bg-[#696969]">
          <BundleView />
        </section>
        <section className="w-[118px] shrink-0 border-l-2 border-[#b4b0a8] bg-white">
          <SequenceView />
        </section>
        <TimeColumn />
      </main>
      <footer className="flex h-3 shrink-0 gap-[1px] border-b-2 border-[#606060] pt-[1px]">
        <span className="w-[91px] border border-[#aaa69e] border-r-white border-b-white pl-[1px] leading-[8px]">Memory usage: 30,34MB</span>
        <span className="w-[94px] border border-[#aaa69e] border-r-white border-b-white" />
        <StatusButton>Settings Panel</StatusButton>
        <StatusButton>Time Window</StatusButton>
      </footer>
      <Annotations />
    </div>
  );
}
